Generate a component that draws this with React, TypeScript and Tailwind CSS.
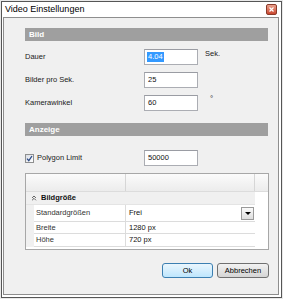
import { ChevronsUp } from "lucide-react";

const Field = ({ value, selected }: { value: string; selected?: boolean }) => (
  <div className="w-[54px] h-[16px] border border-[#abadb3] border-t-[#9a9ca3] bg-white flex items-center pl-[2px] text-[7.5px] text-[#111]">
    {selected ? <span className="bg-[#3399ff] text-white px-px leading-[10px]">{value}</span> : <span className="pl-px">{value}</span>}
  </div>
);

const SectionBar = ({ title }: { title: string }) => (
  <div className="h-[13px] bg-[#9f9f9f] flex items-center pl-[4px] text-[8px] font-bold text-white">
    {title}
  </div>
);

const GridRow = ({ label, value, h, dropdown }: { label: string; value: string; h: string; dropdown?: boolean }) => (
  <div className={`flex ${h} w-[229px]`}>
    <div className="w-[8px] bg-[#f0f0f0]" />
    <div className="w-[92px] border-r border-b border-[#dcdcdc] flex items-center pl-[2px] text-[#333]">{label}</div>
    <div className="flex-1 border-b border-[#dcdcdc] flex items-center justify-between pl-[3px] pr-px text-[#111]">
      <span>{value}</span>
      {dropdown && (
        <div className="w-[13px] h-[13px] border border-[#9a9a9a] bg-linear-to-b from-[#fafafa] to-[#dedede] flex items-center justify-center">
          <div className="w-0 h-0 border-l-[3px] border-r-[3px] border-t-[3px] border-l-transparent border-r-transparent border-t-black" />
        </div>
      )}
    </div>
  </div>
);

export default function App() {
  return (
    <div className="w-[283px] h-[299px] bg-[#e9e9e9] p-px font-['Liberation_Sans',Arial,sans-serif]">
      <div className="h-full border border-[#565656] bg-white flex flex-col pl-px pr-[2px] pb-[2px]">
        {/* Title */}
        <div className="h-[15px] flex items-center justify-between pl-[2px] pr-[2px]">
          <span className="text-[9px] text-black">Video Einstellungen</span>
          <div className="w-[11px] h-[11px] mt-[-1px] rounded-[2px] border border-[#8a3a2a] bg-linear-to-b from-[#e9a08c] to-[#c9452e] flex items-center justify-center">
            <svg width="5" height="5" viewBox="0 0 5 5">
              <path d="M0.5 0.5 L4.5 4.5 M4.5 0.5 L0.5 4.5" stroke="#fff" strokeWidth="1.2" />
            </svg>
          </div>
        </div>

        {/* Client */}
        <div className="flex-1 border border-[#8e8e8e] bg-[#f0f0f0] flex flex-col pl-[21px] pr-[9px] pt-[10px] text-[7.5px] text-[#1a1a1a]">
          <div className="mr-px">
            <SectionBar title="Bild" />
          </div>

          <div className="flex items-center mt-[8px]">
            <span className="w-[119px]">Dauer</span>
            <Field value="4.04" selected />
            <span className="ml-[7px] self-start -mt-px">Sek.</span>
          </div>
          <div className="flex items-center mt-[7px]">
            <span className="w-[119px]">Bilder pro Sek.</span>
            <Field value="25" />
          </div>
          <div className="flex items-center mt-[7px]">
            <span className="w-[119px]">Kamerawinkel</span>
            <Field value="60" />
            <span className="ml-[12px] self-start text-[8px] leading-[6px] mt-px">°</span>
          </div>

          <div className="mt-[12px] mr-px">
            <SectionBar title="Anzeige" />
          </div>

          <div className="flex items-center mt-[14px]">
            <div className="w-[119px] flex items-center gap-[3px]">
              <div className="w-[9px] h-[9px] border border-[#8e8f8f] bg-linear-to-br from-[#d8dce4] to-white flex items-center justify-center">
                <svg width="7" height="7" viewBox="0 0 7 7">
                  <path d="M1 3.6 L2.8 5.6 L6 1" fill="none" stroke="#2c4a86" strokeWidth="1.3" />
                </svg>
              </div>
              <span>Polygon Limit</span>
            </div>
            <Field value="50000" />
          </div>

          {/* Property grid */}
          <div className="mt-[7px] h-[77px] border border-[#a7a7a7] bg-white flex flex-col">
            <div className="h-[18px] flex bg-linear-to-b from-[#fbfbfb] to-[#ececec] border-b border-[#dcdcdc]">
              <div className="w-[100px] border-r border-[#d6d6d6]" />
              <div className="w-[129px] border-r border-[#d6d6d6]" />
              <div className="flex-1" />
            </div>
            <div className="h-[13px] w-[229px] bg-[#f0f0f0] flex items-center pl-[4px] gap-[3px] border-b border-[#e4e4e4]">
              <ChevronsUp size={8} strokeWidth={2.5} className="text-[#444]" />
              <span className="font-bold text-[7.5px] text-[#111]">Bildgröße</span>
            </div>
            <GridRow label="Standardgrößen" value="Frei" h="h-[17px]" dropdown />
            <GridRow label="Breite" value="1280 px" h="h-[12px]" />
            <GridRow label="Höhe" value="720 px" h="h-[13px]" />
          </div>

          <div className="flex justify-end gap-[4px] mt-[13px]">
            <button className="w-[51px] h-[15px] rounded-[3px] border border-[#3c7fb1] bg-linear-to-b from-[#eaf6fd] to-[#bee6fd] text-[7.5px] text-black flex items-center justify-center">
              Ok
            </button>
            <button className="w-[52px] h-[15px] rounded-[3px] border border-[#707070] bg-linear-to-b from-[#f2f2f2] to-[#d5d5d5] text-[7.5px] text-black flex items-center justify-center">
              Abbrechen
            </button>
          </div>
        </div>
      </div>
    </div>
  );
}
